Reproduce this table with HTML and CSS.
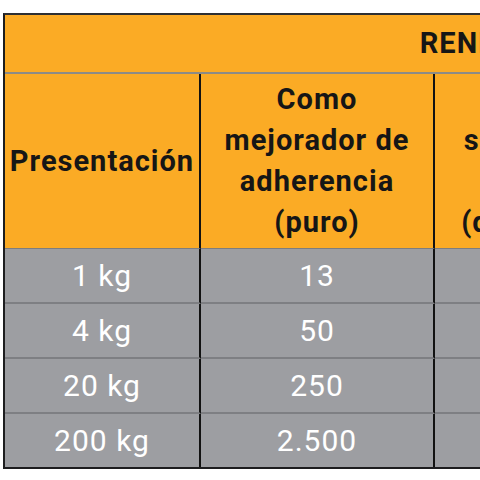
FILE: index.html
```html
<!DOCTYPE html>
<html lang="es">
<head>
<meta charset="utf-8">
<title>Rendimiento</title>
<link rel="stylesheet" href="styles.css">
</head>
<body>
<div class="page">
  <table class="yield">
    <colgroup>
      <col class="c-pres">
      <col class="c-adh">
      <col class="c-sel">
      <col class="c-rest">
    </colgroup>
    <thead>
      <tr>
        <th class="title" colspan="4">RENDIMIENTO</th>
      </tr>
      <tr class="subhead">
        <th class="first">Presentación</th>
        <th>Como<br>mejorador de<br>adherencia<br>(puro)</th>
        <th>Como<br>sellador<br>1:4<br>(diluido)</th>
        <th class="last">Como<br>aditivo<br>de morteros<br>(m²)</th>
      </tr>
    </thead>
    <tbody>
      <tr>
        <td class="first">1 kg</td>
        <td>13</td>
        <td>40</td>
        <td class="last">4</td>
      </tr>
      <tr>
        <td class="first">4 kg</td>
        <td>50</td>
        <td>160</td>
        <td class="last">16</td>
      </tr>
      <tr>
        <td class="first">20 kg</td>
        <td>250</td>
        <td>800</td>
        <td class="last">80</td>
      </tr>
      <tr class="end">
        <td class="first">200 kg</td>
        <td>2.500</td>
        <td>8.000</td>
        <td class="last">800</td>
      </tr>
    </tbody>
  </table>
</div>
</body>
</html>
```
FILE: styles.css
```css
html, body {
  margin: 0;
  padding: 0;
  background: #ffffff;
  overflow: hidden;
}

.page {
  width: 480px;
  height: 480px;
  overflow: hidden;
  padding: 13px 0 0 3px;
  box-sizing: border-box;
}

.yield {
  border-collapse: separate;
  border-spacing: 0;
  table-layout: fixed;
  width: 1033px;
  border-top: 2px solid #2e2f33;
  border-left: 2px solid #1d1d1f;
  border-bottom: 2px solid #1d1d1f;
  font-family: Roboto, "Noto Sans", sans-serif;
}

.c-pres { width: 196px; }
.c-adh { width: 234px; }
.c-sel { width: 172px; }
.c-rest { width: 429px; }

.yield th,
.yield td {
  box-sizing: border-box;
  padding: 0;
  text-align: center;
  vertical-align: middle;
}

.yield th {
  background: #fbab25;
  color: #161616;
  font-weight: 700;
  font-size: 29px;
  line-height: 41px;
  letter-spacing: 1px;
}

.title {
  height: 59px;
  border-bottom: 2px solid #8c8b87;
}

.subhead th {
  height: 175px;
  border-right: 2px solid #121212;
  border-bottom: 1px solid #7c7d80;
}

.subhead th.last,
.yield td.last {
  border-right: none;
}

.yield td {
  height: 55px;
  background: #9d9ea2;
  color: #ffffff;
  font-size: 30px;
  font-weight: 400;
  letter-spacing: 1px;
  border-right: 2px solid #121212;
  border-bottom: 2px solid #7e7f83;
}

.yield tr.end td {
  height: 53px;
  border-bottom: none;
}
```
